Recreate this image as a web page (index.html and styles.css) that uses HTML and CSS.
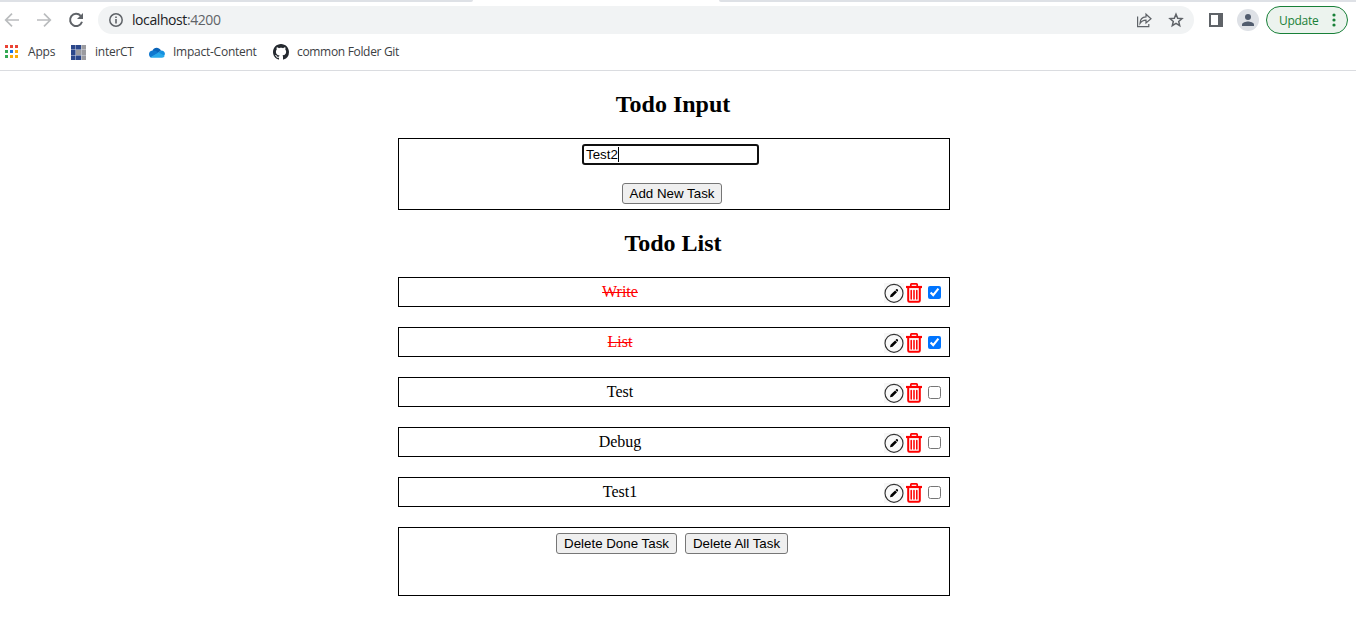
FILE: index.html
```html
<!DOCTYPE html>
<html lang="en">
<head>
<meta charset="utf-8">
<title>Todo</title>
<link rel="stylesheet" href="styles.css">
</head>
<body>
<svg class="defs" width="0" height="0" aria-hidden="true">
  <symbol id="pencil" viewBox="0 0 20 20">
    <rect width="20" height="20" fill="#f7f7f7"/>
    <circle cx="10" cy="10.3" r="9" fill="#f9f9f9" stroke="#333" stroke-width="1.15"/>
    <path d="M6 14.300l.6-2.500 4.500-4.300 1.900 1.800-4.500 4.400z M11.500 7.100l.8-.8c.4-.3.8-.3 1.100 0l.5.5c.3.400.3.700 0 1.100l-.6.8z" fill="#000"/>
  </symbol>
  <symbol id="trash" viewBox="0 0 16 20">
    <g fill="none" stroke="#f00">
      <path d="M0 4h16" stroke-width="2.200"/>
      <path d="M4.800 3V1.600q0-.7.7-.7h5q.7 0 .7.700V3" stroke-width="1.700"/>
      <path d="M2.200 4.500v13q0 1.300 1.300 1.300h9q1.300 0 1.300-1.300v-13" stroke-width="2"/>
      <path d="M5.200 7.500v8.500M8 7.500v8.500M10.800 7.500v8.500" stroke-width="1.500" stroke-linecap="round"/>
    </g>
  </symbol>
</svg>

<header class="browser">
  <div class="tabstrip"><i class="tab-left"></i><i class="tab-right"></i></div>
  <div class="toolbar">
    <svg class="nav" width="98" height="28" viewBox="0 0 98 28" fill="none" stroke-width="1.700">
      <path d="M19 14H6M12 7.700L5.700 14l6.300 6.300" stroke="#babcbe"/>
      <path d="M37 14h13M44 7.700l6.300 6.300-6.300 6.300" stroke="#babcbe"/>
      <path d="M80.700 9.800A6.100 6.100 0 1 0 82 15.800" stroke="#5f6368" stroke-width="2"/>
      <path d="M83 7v6h-6z" fill="#5f6368"/>
    </svg>
    <div class="omnibox">
      <svg width="16" height="16" viewBox="0 0 16 16"><circle cx="8" cy="8" r="6.200" fill="none" stroke="#5f6368" stroke-width="1.500"/><path d="M7.200 7h1.600v4.500H7.200zM7.200 4.500h1.600V6H7.200z" fill="#5f6368"/></svg>
      <span class="url">localhost<span class="port">:4200</span></span>
      <svg class="share" width="18" height="18" viewBox="0 0 18 18" fill="none" stroke="#5f6368" stroke-width="1.200"><path d="M2.600 5.500v10.200h11.200V13"/><path d="M5 12.500C5 8 7.500 6.100 11 5.900V3.200L16 7.700l-5 4.300V9.200C8.500 9.200 6.500 10 5 12.500z"/></svg>
      <svg class="star" width="16" height="16" viewBox="0 0 16 16" fill="none" stroke="#5f6368" stroke-width="1.500"><path d="M8 2.200l1.700 4 4.300.4-3.300 2.800 1 4.200L8 11.400l-3.700 2.200 1-4.200L2 6.600l4.300-.4z"/></svg>
    </div>
    <svg class="panel" width="14" height="14" viewBox="0 0 14 14"><path fill="#5f6368" fill-rule="evenodd" d="M0 0h14v14H0zM2 2v10h7V2z"/></svg>
    <svg class="avatar" width="22" height="22" viewBox="0 0 22 22"><circle cx="11" cy="11" r="11" fill="#dee1e6"/><circle cx="11" cy="8" r="3" fill="#515c6e"/><path d="M5 17v-1.500c0-2 4-3 6-3s6 1 6 3V17z" fill="#515c6e"/></svg>
    <div class="update"><span>Update</span><svg width="4" height="14" viewBox="0 0 4 14" fill="#188038"><circle cx="2" cy="2" r="1.600"/><circle cx="2" cy="7" r="1.600"/><circle cx="2" cy="12" r="1.600"/></svg></div>
  </div>
  <nav class="bookmarks">
    <a class="bm bm-apps"><svg width="13" height="13" viewBox="0 0 13 13"><path fill="#ea4335" d="M0 0h3v3H0zM5 0h3v3H5zM10 0h3v3h-3z"/><path fill="#34a853" d="M0 5h3v3H0zM0 10h3v3H0z"/><path fill="#1a73e8" d="M5 5h3v3H5z"/><path fill="#fbab08" d="M10 5h3v3h-3zM5 10h3v3H5zM10 10h3v3h-3z"/></svg><span>Apps</span></a>
    <a class="bm bm-inter"><svg width="15" height="15" viewBox="0 0 15 15"><path fill="#d5d9e5" d="M0 0h15v15H0z"/><path fill="#2b478b" d="M0 0h4.500v4.500H0zM5 0h5v4.500H5zM0 5h4.500v5H0zM0 10.500h4.500V15H0zM5 10.500h5V15H5z"/><path fill="#9b9b9f" d="M10.500 0H15v4.500h-4.500zM5 5h5v5H5zM10.500 5H15v5h-4.500zM10.500 10.500H15V15h-4.500z"/></svg><span>interCT</span></a>
    <a class="bm bm-cloud"><svg width="16" height="11" viewBox="0 0 16 11"><path fill="#0a64b8" d="M3.500 3.600C4.500.5 9.500-1 12 3.500L8 7z"/><path fill="#0f78d0" d="M3.500 3.500C1 3.700 0 5.500 0 7.200c0 1.500.7 2.600 1.800 3.200L10 6 6.500 3.800q-1.400-.6-3-.3z"/><path fill="#1490df" d="M9 6l3-2.500c2.500 0 4 1.700 4 3.700L14.500 9z"/><path fill="#28a8ea" d="M1.500 10.300L9.500 5.600l6.300 3.200c-.5 1.300-1.500 2-2.800 2H3.500q-1.200 0-2-.5z"/></svg><span>Impact-Content</span></a>
    <a class="bm bm-git"><svg width="16" height="16" viewBox="0 0 16 16"><path fill="#24292f" d="M8 0C3.580 0 0 3.580 0 8c0 3.540 2.290 6.530 5.470 7.590.4.070.55-.17.55-.38 0-.19-.01-.82-.01-1.490-2.010.37-2.530-.49-2.690-.94-.09-.23-.48-.94-.82-1.130-.28-.15-.68-.52-.01-.53.63-.01 1.080.58 1.230.82.72 1.210 1.870.87 2.330.66.07-.52.28-.87.51-1.070-1.780-.2-3.640-.89-3.640-3.950 0-.87.31-1.590.82-2.150-.08-.2-.36-1.020.08-2.120 0 0 .67-.21 2.200.82.64-.18 1.320-.27 2-.27s1.360.09 2 .27c1.530-1.040 2.200-.82 2.200-.82.44 1.100.16 1.920.08 2.120.51.56.82 1.270.82 2.150 0 3.070-1.870 3.750-3.650 3.950.29.25.54.73.54 1.480 0 1.070-.01 1.930-.01 2.200 0 .21.15.46.55.38A8.010 8.010 0 0 0 16 8c0-4.420-3.580-8-8-8z"/></svg><span>common Folder Git</span></a>
  </nav>
</header>

<main class="page">
  <h2>Todo Input</h2>
  <section class="box input-box">
    <div class="field"><span>Test2</span><i class="caret"></i></div>
    <button class="btn add">Add New Task</button>
  </section>
  <h2>Todo List</h2>
  <section class="list">
    <div class="box row done"><span class="task">Write</span><svg class="pencil"><use href="#pencil"/></svg><svg class="trash"><use href="#trash"/></svg><input type="checkbox" checked></div>
    <div class="box row done"><span class="task">List</span><svg class="pencil"><use href="#pencil"/></svg><svg class="trash"><use href="#trash"/></svg><input type="checkbox" checked></div>
    <div class="box row"><span class="task">Test</span><svg class="pencil"><use href="#pencil"/></svg><svg class="trash"><use href="#trash"/></svg><input type="checkbox"></div>
    <div class="box row"><span class="task">Debug</span><svg class="pencil"><use href="#pencil"/></svg><svg class="trash"><use href="#trash"/></svg><input type="checkbox"></div>
    <div class="box row"><span class="task">Test1</span><svg class="pencil"><use href="#pencil"/></svg><svg class="trash"><use href="#trash"/></svg><input type="checkbox"></div>
  </section>
  <section class="box actions">
    <button class="btn del-done">Delete Done Task</button>
    <button class="btn del-all">Delete All Task</button>
  </section>
</main>
</body>
</html>
```

FILE: styles.css
```css
* { box-sizing: border-box; }
body { margin: 0; background: #fff; height: 628px; overflow: hidden; font-family: "Liberation Serif", "Times New Roman", serif; color: #000; }
svg { display: block; flex: none; }
.defs { position: absolute; }

/* Browser chrome */
.browser { height: 71px; border-bottom: 1px solid #dadce0; font-family: "Open Sans", "Noto Sans", sans-serif; }
.tabstrip { display: flex; justify-content: space-between; height: 2px; }
.tabstrip i { background: #dee1e6; height: 2px; }
.tab-left { width: 473px; border-bottom-right-radius: 3px; }
.tab-right { width: 637px; border-bottom-left-radius: 3px; }
.toolbar { display: flex; align-items: center; height: 36px; padding-right: 8px; }
.omnibox { display: flex; align-items: center; width: 1096px; height: 28px; padding: 0 10px; border-radius: 14px; background: #f1f3f4; }
.url { margin-left: 8px; font-size: 14px; line-height: 20px; color: #202124; letter-spacing: -0.42px; }
.port { color: #5f6368; }
.share { margin-left: auto; margin-right: 15px; }
.panel { margin-left: 15px; }
.avatar { margin-left: 14px; }
.update { display: flex; align-items: center; justify-content: space-between; width: 82px; height: 28px; margin-left: 7px; padding: 0 11px 0 12px; border: 1px solid #188038; border-radius: 14px; background: #ecf3ee; color: #188038; font-size: 12px; letter-spacing: -0.3px; }
.bookmarks { display: flex; align-items: center; height: 28px; padding-left: 5px; font-size: 12px; line-height: 16px; color: #3c4043; }
.bm { display: flex; align-items: center; white-space: nowrap; }
.bm-apps { width: 66px; gap: 10px; letter-spacing: -0.2px; }
.bm-apps svg { margin-bottom: 1px; }
.bm-inter { width: 78px; gap: 9px; }
.bm-cloud { width: 124px; gap: 8px; }
.bm-git { gap: 8px; }
.bm-inter, .bm-cloud { letter-spacing: -0.25px; }
.bm-git { letter-spacing: -0.32px; }

/* Todo page */
.page { width: 552px; margin-left: 398px; }
h2 { margin: 0; padding: 19px 2px 0 0; height: 67px; font-size: 24px; line-height: 28px; text-align: center; }
.box { border: 1px solid #000; }
.input-box { display: flex; flex-direction: column; align-items: center; height: 72px; padding-top: 5px; }
.field { display: flex; align-items: center; width: 177px; height: 21px; margin-right: 7px; padding-left: 2px; border: 2px solid #101010; border-radius: 3px; font: 13.333px "Liberation Sans", Arial, sans-serif; }
.caret { width: 1px; height: 15px; background: #000; }
.btn { height: 21px; padding: 0; border: 1px solid #767676; border-radius: 3px; background: #efefef; color: #000; font: 13.333px "Liberation Sans", Arial, sans-serif; white-space: nowrap; }
.add { width: 100px; margin: 18px 4px 0 0; }
.list { display: flex; flex-direction: column; gap: 20px; }
.row { display: flex; height: 30px; padding-top: 5px; }
.task { width: 442px; margin-right: 43px; font-size: 16px; line-height: 18px; text-align: center; }
.done .task { color: #f00; text-decoration: line-through; }
.pencil { width: 20px; height: 20px; }
.trash { width: 16px; height: 20px; margin-left: 2px; }
.row input { width: 13px; height: 13px; margin: 3px 0 0 6px; flex: none; }
.actions { display: flex; justify-content: center; gap: 8px; height: 69px; margin-top: 20px; padding: 5px 4px 0 0; }
.del-done { width: 121px; }
.del-all { width: 103px; }
```
